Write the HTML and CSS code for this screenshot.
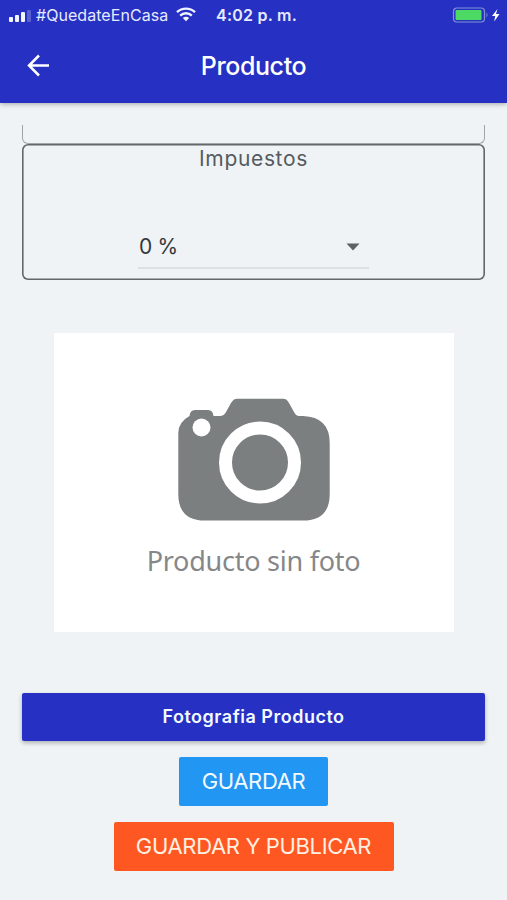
FILE: index.html
```html
<!DOCTYPE html>
<html lang="es">
<head>
<meta charset="utf-8">
<title>Producto</title>
<link rel="stylesheet" href="styles.css">
</head>
<body>
<header class="header">
  <div class="status">
    <svg class="signal" width="22" height="13" viewBox="0 0 22 13" fill="#f1f5ff"><rect y="8" width="4" height="5" rx="1"/><rect x="6" y="6" width="4" height="7" rx="1"/><rect x="12" y="3" width="4" height="10" rx="1"/><rect x="18" y="1" width="4" height="12" rx="1" opacity=".25"/></svg>
    <span class="carrier">#QuedateEnCasa</span>
    <svg class="wifi" width="20" height="15" viewBox="0 0 20 15" fill="none" stroke="#f1f5ff" stroke-width="2.4"><path d="M1 5.200C6 .4 14 .4 19 5.200M4.200 8.600c3.300-3.100 8.300-3.100 11.600 0"/><path d="M6.800 11.100c1.800-1.700 4.600-1.700 6.400 0L10 14.300z" fill="#f1f5ff" stroke="none"/></svg>
    <span class="time">4:02 p. m.</span>
    <svg class="battery" width="48" height="16" viewBox="0 0 48 16"><rect x="1.500" y="1" width="31" height="14" rx="3.500" fill="none" stroke="#8193d8" stroke-width="1.200"/><rect x="3.500" y="3" width="26" height="10" rx="1" fill="#4cda64"/><path d="M34.500 5.500q2 2.500 0 5z" fill="#8193d8"/><path d="M45.500 2 40 9H43.200l-1 5.500L47.500 7H44z" fill="#fff"/></svg>
  </div>
  <nav class="toolbar">
    <svg class="back" width="23" height="23" viewBox="0 0 23 23" fill="none" stroke="#fff" stroke-width="2.500"><path d="M22 11.500H2.500M12 1.500 2 11.500 12 21.500"/></svg>
    <h1 class="title">Producto</h1>
  </nav>
</header>
<main class="content">
  <div class="previous"></div>
  <section class="tax">
    <h2 class="label">Impuestos</h2>
    <div class="select">
      <span class="value">0 %</span>
      <svg width="14" height="8" viewBox="0 0 14 8"><path d="M.5.600h13L7 7.400z" fill="#5c6163"/></svg>
    </div>
  </section>
  <figure class="photo">
    <svg width="152" height="123" viewBox="178 398 152 123">
      <path d="M178.300 433Q178.300 422 189.500 416 190 410 195 410H208Q213 410 213.500 416H220Q224 416 226 412L231 403Q233.500 398.700 237 398.700H283Q287 398.700 289 403L294 412Q296 416 299 416H303Q329.700 417 329.700 443V494Q329.700 520.600 303 520.600H205Q178.300 520.600 178.300 494Z" fill="#7b7f80"/>
      <circle cx="201.500" cy="427.500" r="9" fill="#fff"/>
      <circle cx="260" cy="462.500" r="34.500" fill="none" stroke="#fff" stroke-width="13"/>
    </svg>
    <figcaption class="caption">Producto sin foto</figcaption>
  </figure>
  <button class="btn upload"><span>Fotografia Producto</span></button>
  <button class="btn save"><span>GUARDAR</span></button>
  <button class="btn publish"><span>GUARDAR Y PUBLICAR</span></button>
</main>
</body>
</html>
```
FILE: styles.css
```css
* { box-sizing: border-box; }
body {
  margin: 0;
  height: 900px;
  overflow: hidden;
  background: #eff3f6;
  font-family: Inter, "Liberation Sans", sans-serif;
  white-space: nowrap;
}
svg { display: block; flex: none; }
h1, h2, figure { margin: 0; }
.header {
  height: 103px;
  background: #2630c2;
  box-shadow: 0 1px 5px rgba(0, 0, 0, .32);
  color: #fff;
}
.status {
  height: 30px;
  display: flex;
  align-items: center;
  padding: 0 7px 0 9px;
  color: #e5eaff;
}
.carrier {
  width: 133px;
  margin-left: 5px;
  font-size: 16px;
  letter-spacing: .05px;
}
.wifi { margin: 0 0 2px 7px; }
.time {
  margin-left: 20px;
  font-size: 16px;
  font-weight: 600;
  letter-spacing: .25px;
}
.battery { margin-left: auto; }
.toolbar {
  height: 73px;
  display: grid;
  grid-template-columns: 50px 1fr 50px;
  align-items: center;
}
.back { margin: 0 0 2px 27px; }
.title {
  padding-bottom: 1px;
  text-align: center;
  font-size: 25px;
  line-height: 30px;
  font-weight: 500;
  letter-spacing: -.4px;
}
.content {
  display: flex;
  flex-direction: column;
  align-items: center;
  padding: 22px 22px 0;
}
.previous {
  width: 463px;
  height: 19px;
  border: solid #a0a5a7;
  border-width: 0 1px 1px;
  border-radius: 0 0 6px 6px;
}
.tax {
  width: 463px;
  height: 136px;
  padding-top: 2px;
  box-shadow: inset 0 0 0 1.6px #626769;
  border-radius: 6px;
  display: flex;
  flex-direction: column;
  align-items: center;
}
.label {
  font-size: 21px;
  line-height: 25px;
  font-weight: 400;
  letter-spacing: .65px;
  color: #555b5f;
}
.select {
  width: 231px;
  height: 43px;
  margin-top: 55px;
  border-bottom: 2px solid #dce0e3;
  display: flex;
  align-items: center;
  justify-content: space-between;
  padding: 0 9px 0 1px;
}
.value { font-size: 21px; letter-spacing: -.3px; color: #33383b; }
.photo {
  width: 400px;
  height: 299px;
  margin-top: 53px;
  background: #fff;
  display: flex;
  flex-direction: column;
  align-items: center;
  padding-top: 65px;
}
.caption {
  margin-top: 22px;
  font: 400 27px/36px "Noto Sans", sans-serif;
  letter-spacing: -.25px;
  color: #858788;
}
.btn {
  height: 49px;
  border: 0;
  border-radius: 2px;
  padding: 0 0 2px;
  color: #f3faff;
  font: 400 22px/26px Inter, sans-serif;
  letter-spacing: -.35px;
}
.upload {
  width: 463px;
  height: 48px;
  margin-top: 61px;
  padding: 0;
  background: #2630c2;
  box-shadow: 0 2px 4px rgba(0, 0, 0, .28);
  font-size: 18px;
  font-weight: 600;
  letter-spacing: .5px;
}
.save {
  width: 149px;
  margin-top: 16px;
  background: #2196f3;
}
.publish {
  width: 280px;
  margin-top: 16px;
  background: #ff5722;
  color: #fff0e2;
}
```
